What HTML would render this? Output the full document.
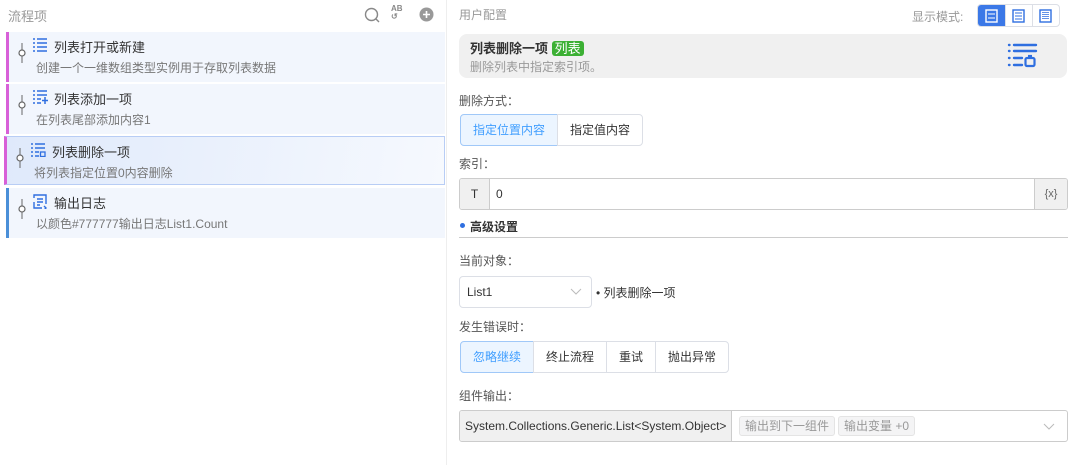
<!DOCTYPE html>
<html><head><meta charset="utf-8"><style>
*{box-sizing:border-box;margin:0;padding:0}
body{width:1075px;height:465px;background:#fff;font-family:"Liberation Sans","Noto Sans CJK SC",sans-serif;font-size:12px;color:#333;position:relative;overflow:hidden}
.a{position:absolute}
.card{position:absolute;left:6px;width:439px;height:50px;background:#f2f6fd;border-left:3px solid #d860d8}
.card .t{position:absolute;left:45px;top:5px;font-size:13px;color:#333}
.card .d{position:absolute;left:27px;top:27px;font-size:12px;color:#777}
.card .pin{position:absolute;left:9px;top:11px}
.card .ic{position:absolute;left:24px;top:6px}
.lbl{position:absolute;left:459px;color:#555;font-size:12px}
.btn{position:absolute;height:32px;border:1px solid #dcdfe6;background:#fff;text-align:center;line-height:30px;font-size:12px;color:#333}
.btn.on{background:#ecf5ff;border-color:#a0c8f8;color:#409eff}
</style></head><body>
<div class="a" style="left:8px;top:6px;color:#999;font-size:13px">流程项</div>
<svg class="a" style="left:364px;top:7px" width="16" height="16"><circle cx="7.5" cy="7.5" r="6" fill="none" stroke="#888" stroke-width="1.4"/><line x1="12" y1="12" x2="15" y2="15" stroke="#888" stroke-width="1.4"/></svg>
<div class="a" style="left:391px;top:5px;font-size:8px;color:#888;font-weight:bold;line-height:8px">AB<br>↺</div>
<svg class="a" style="left:419px;top:7px" width="15" height="15"><circle cx="7.5" cy="7.5" r="7" fill="#999"/><path d="M7.5 4v7M4 7.5h7" stroke="#fff" stroke-width="1.6"/></svg>
<div class="a" style="left:446px;top:0;width:1px;height:465px;background:#eee"></div>

<div class="card" style="top:32px"><svg class="pin" width="8" height="20"><line x1="4" y1="0" x2="4" y2="20" stroke="#666"/><circle cx="4" cy="10" r="3" fill="#fff" stroke="#666" stroke-width="1.2"/></svg><svg class="ic" width="14" height="14"><path d="M0 1h2M4 1h10M0 5h2M4 5h10M0 9h2M4 9h10M0 13h2M4 13h10" stroke="#2f6fe0" stroke-width="1.5"/></svg><div class="t">列表打开或新建</div><div class="d">创建一个一维数组类型实例用于存取列表数据</div></div>
<div class="card" style="top:84px"><svg class="pin" width="8" height="20"><line x1="4" y1="0" x2="4" y2="20" stroke="#666"/><circle cx="4" cy="10" r="3" fill="#fff" stroke="#666" stroke-width="1.2"/></svg><svg class="ic" width="15" height="14"><path d="M0 1h2M4 1h10M0 5h2M4 5h10M0 9h2M4 9h4M0 13h2M4 13h4M12 7v7M9 10.5h6" stroke="#2f6fe0" stroke-width="1.5"/></svg><div class="t">列表添加一项</div><div class="d">在列表尾部添加内容1</div></div>
<div class="card" style="top:136px;height:49px;background:linear-gradient(100deg,#dfe9fb,#f6f9fe);border:1px solid #b8cdf5;border-left:3px solid #d860d8;left:4px;width:441px"><svg class="pin" width="8" height="20"><line x1="4" y1="0" x2="4" y2="20" stroke="#666"/><circle cx="4" cy="10" r="3" fill="#fff" stroke="#666" stroke-width="1.2"/></svg><svg class="ic" width="15" height="14"><path d="M0 1h2M4 1h10M0 5h2M4 5h10M0 9h2M4 9h4M0 13h2M4 13h4" stroke="#2f6fe0" stroke-width="1.5"/><rect x="9.5" y="9" width="4.5" height="4.5" fill="none" stroke="#2f6fe0" stroke-width="1.3"/></svg><div class="t">列表删除一项</div><div class="d">将列表指定位置0内容删除</div></div>
<div class="card" style="top:188px;border-left-color:#4a8fd8"><svg class="pin" width="8" height="20"><line x1="4" y1="0" x2="4" y2="20" stroke="#666"/><circle cx="4" cy="10" r="3" fill="#fff" stroke="#666" stroke-width="1.2"/></svg><svg class="ic" width="15" height="15"><path d="M1 4V1h12v9M1 8v6h8M4 5h6M4 8h6M4 11h3M11 12l2 2-2 2" fill="none" stroke="#2f6fe0" stroke-width="1.4"/></svg><div class="t">输出日志</div><div class="d">以颜色#777777输出日志List1.Count</div></div>

<div class="a" style="left:459px;top:6px;color:#999;font-size:12px">用户配置</div>
<div class="a" style="left:912px;top:8px;color:#999;font-size:12px">显示模式:</div>
<div class="a" style="left:977px;top:4px;width:83px;height:23px;border:1px solid #dcdfe6;border-radius:4px;overflow:hidden">
<div class="a" style="left:0;top:0;width:27px;height:23px;background:#3b78e7"></div>
<svg class="a" style="left:7px;top:4px" width="13" height="14"><rect x="1" y="1" width="11" height="12" fill="none" stroke="#fff" stroke-width="1.4"/><path d="M3 5h7M3 9h7" stroke="#fff"/></svg>
<div class="a" style="left:27px;top:0;width:1px;height:23px;background:#dcdfe6"></div>
<svg class="a" style="left:34px;top:4px" width="13" height="14"><rect x="1" y="1" width="11" height="12" fill="none" stroke="#2f6fe0" stroke-width="1.4"/><path d="M3 4h7M3 7h7M3 10h7" stroke="#2f6fe0"/></svg>
<div class="a" style="left:54px;top:0;width:1px;height:23px;background:#dcdfe6"></div>
<svg class="a" style="left:61px;top:4px" width="13" height="14"><rect x="1" y="1" width="11" height="12" fill="none" stroke="#2f6fe0" stroke-width="1.4"/><path d="M3 3.5h7M3 5.5h7M3 7.5h7M3 9.5h7" stroke="#2f6fe0" stroke-width=".8"/></svg>
</div>

<div class="a" style="left:459px;top:34px;width:608px;height:44px;background:#f0f0f0;border-radius:8px">
<div class="a" style="left:11px;top:4px;font-weight:bold;font-size:13px;color:#333">列表删除一项 <span style="background:#3cb034;color:#fff;font-weight:normal;border-radius:3px;padding:0 3px">列表</span></div>
<div class="a" style="left:11px;top:24px;color:#999;font-size:12px">删除列表中指定索引项。</div>
<svg class="a" style="left:548px;top:9px" width="32" height="32"><path d="M2 2h0.5M7 2h22M2 8h0.5M7 8h22M2 15h0.5M7 15h8M2 22h0.5M7 22h8" stroke="#2f6fe0" stroke-width="2.4" stroke-linecap="round"/><rect x="18.5" y="15" width="9" height="8" rx="1.5" fill="none" stroke="#2f6fe0" stroke-width="2.2"/><path d="M21 13h4" stroke="#2f6fe0" stroke-width="2.2"/></svg>
</div>

<div class="lbl" style="top:92px">删除方式：</div>
<div class="btn on" style="left:460px;top:114px;width:98px;border-radius:4px 0 0 4px">指定位置内容</div>
<div class="btn" style="left:557px;top:114px;width:86px;border-radius:0 4px 4px 0">指定值内容</div>
<div class="lbl" style="top:155px">索引：</div>
<div class="a" style="left:459px;top:178px;width:609px;height:32px;border:1px solid #ccc;border-radius:3px;overflow:hidden">
<div class="a" style="left:0;top:0;width:30px;height:30px;background:#f0f0f0;border-right:1px solid #ccc;text-align:center;line-height:30px">T</div>
<div class="a" style="left:36px;top:0;line-height:30px">0</div>
<div class="a" style="right:0;top:0;width:33px;height:30px;background:#f0f0f0;border-left:1px solid #ccc;text-align:center;line-height:30px;font-size:11px;color:#666">{x}</div>
</div>
<div class="a" style="left:460px;top:223px;width:5px;height:5px;border-radius:50%;background:#2f6fe0"></div>
<div class="a" style="left:470px;top:218px;font-weight:bold;font-size:12px">高级设置</div>
<div class="a" style="left:459px;top:237px;width:609px;height:1px;background:#ccc"></div>
<div class="lbl" style="top:252px">当前对象：</div>
<div class="a" style="left:459px;top:276px;width:133px;height:32px;border:1px solid #dcdfe6;border-radius:4px">
<div class="a" style="left:7px;top:8px">List1</div>
<svg class="a" style="left:110px;top:11px" width="12" height="8"><path d="M1 1l5 5 5-5" fill="none" stroke="#bbb"/></svg></div>
<div class="a" style="left:596px;top:284px">• 列表删除一项</div>
<div class="lbl" style="top:318px">发生错误时：</div>
<div class="btn on" style="left:460px;top:341px;width:74px;border-radius:4px 0 0 4px">忽略继续</div>
<div class="btn" style="left:533px;top:341px;width:74px">终止流程</div>
<div class="btn" style="left:606px;top:341px;width:50px">重试</div>
<div class="btn" style="left:655px;top:341px;width:74px;border-radius:0 4px 4px 0">抛出异常</div>
<div class="lbl" style="top:387px">组件输出：</div>
<div class="a" style="left:459px;top:410px;width:609px;height:32px;border:1px solid #ccc;border-radius:3px;overflow:hidden">
<div class="a" style="left:0;top:0;width:272px;height:30px;background:#f0f0f0;border-right:1px solid #ccc;line-height:30px;padding-left:5px;color:#333">System.Collections.Generic.List&lt;System.Object&gt;</div>
<div class="a" style="left:279px;top:5px;height:20px;border:1px solid #e4e4e4;background:#f4f4f5;border-radius:3px;padding:0 5px;line-height:18px;color:#999">输出到下一组件</div>
<div class="a" style="left:378px;top:5px;height:20px;border:1px solid #e4e4e4;background:#f4f4f5;border-radius:3px;padding:0 5px;line-height:18px;color:#999">输出变量 +0</div>
<svg class="a" style="left:583px;top:12px" width="12" height="8"><path d="M1 1l5 5 5-5" fill="none" stroke="#bbb"/></svg></div>
</body></html>
